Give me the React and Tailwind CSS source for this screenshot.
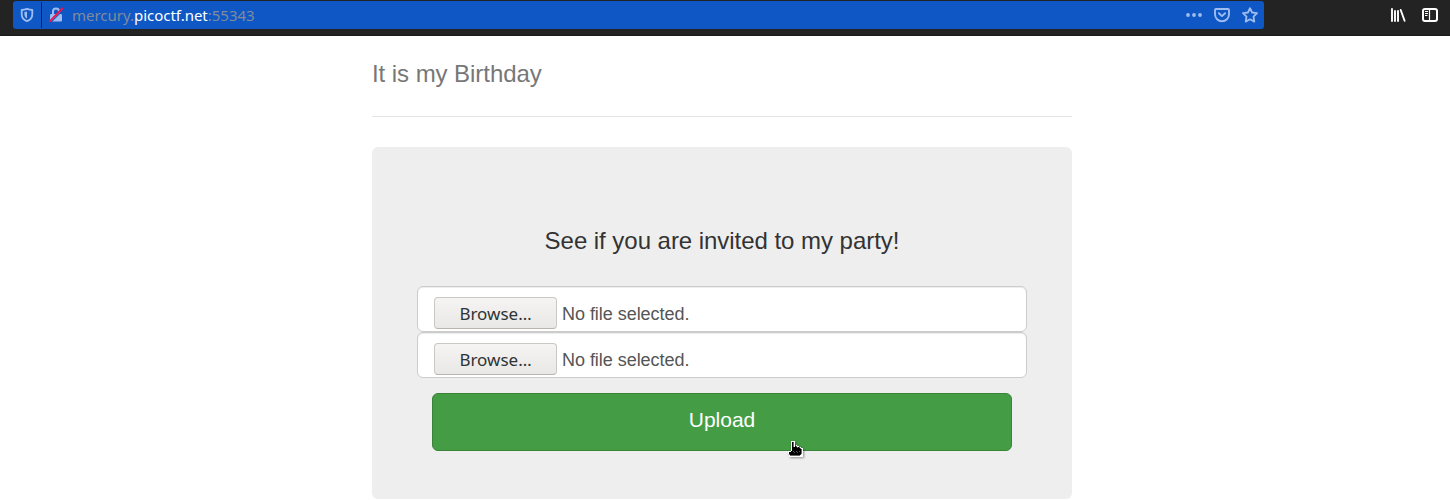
function Shield() {
  return (
    <svg width="16" height="16" viewBox="0 0 16 16" fill="none">
      <path d="M8 1.9C10 2.7 11.8 3 13.3 3V7.2C13.3 10.8 11 13.1 8 14.2C5 13.1 2.7 10.8 2.7 7.2V3C4.2 3 6 2.7 8 1.9Z" stroke="#9dbdf0" strokeWidth="1.8" strokeLinejoin="round" />
      <path d="M8 4.5V11.6C6.3 10.6 5.4 9.1 5.4 7.1V5C6.4 4.9 7.3 4.8 8 4.5Z" fill="#9dbdf0" />
    </svg>
  );
}

function InsecureLock() {
  return (
    <svg width="16" height="16" viewBox="0 0 16 16" fill="none">
      <path d="M5 8V4.6A3 3 0 0 1 11 4.6V8" stroke="#9dbdf0" strokeWidth="2" />
      <rect x="2" y="7" width="12" height="7.6" rx="1.3" fill="#9dbdf0" />
      <path d="M2.8 15.4L15.8 2.4" stroke="#0e57c4" strokeWidth="1.1" />
      <path d="M1.8 14.3L14.3 1.5" stroke="#f0134d" strokeWidth="1.9" strokeLinecap="round" />
    </svg>
  );
}

function Dots() {
  return (
    <svg width="16" height="16" viewBox="0 0 16 16" fill="#9dbdf0">
      <circle cx="2" cy="8" r="1.9" />
      <circle cx="8" cy="8" r="1.9" />
      <circle cx="14" cy="8" r="1.9" />
    </svg>
  );
}

function Pocket() {
  return (
    <svg width="16" height="16" viewBox="0 0 16 16" fill="none" stroke="#9dbdf0" strokeWidth="1.9" strokeLinecap="round" strokeLinejoin="round">
      <path d="M2 2H14Q15 2 15 3V7.3A7 7 0 0 1 1 7.3V3Q1 2 2 2Z" />
      <path d="M4.9 6.2L8 9.1L11.1 6.2" />
    </svg>
  );
}

function Star() {
  return (
    <svg width="16" height="16" viewBox="0 0 16 16" fill="none">
      <path d="M8 1.2L10.1 5.5L15 6.2L11.5 9.6L12.3 14.6L8 12.3L3.7 14.6L4.5 9.6L1 6.2L5.9 5.5Z" stroke="#9dbdf0" strokeWidth="1.8" strokeLinejoin="round" />
    </svg>
  );
}

function Library() {
  return (
    <svg width="16" height="16" viewBox="0 0 16 16" fill="none" stroke="#fff" strokeLinecap="round">
      <path d="M2 2V14M5 4V14M8 4V14" strokeWidth="1.9" />
      <path d="M10.7 3L14.6 13.8" strokeWidth="1.9" />
    </svg>
  );
}

function Sidebar() {
  return (
    <svg width="16" height="16" viewBox="0 0 16 16" fill="none" stroke="#fff">
      <rect x="1" y="2" width="14" height="12" rx="2" strokeWidth="2" />
      <path d="M7.5 2V14" strokeWidth="1.2" />
      <path d="M3 4.5H6M3 6.5H6M3 8.5H5.5" strokeWidth="1" />
    </svg>
  );
}

function Hand() {
  return (
    <svg width="17" height="18" viewBox="0 0 17 18" className="absolute left-[355px] top-[47px] drop-shadow-[1px_1px_1px_rgba(0,0,0,0.4)]" shapeRendering="crispEdges">
      <path d="M5 1H7V6H9V5H10V6H12V7H14V8H15V16H2V14H1V11H5Z" fill="#fff" />
      <path d="M4 1H7V6H10V7H13V8H15V16H2V11H4Z" fill="none" stroke="#fff" />
      <path d="M5 2H6V7H8V6H9V7H10V8H11V7H12V8H13V9H14V14H13V15H3V14H2V12H4V11H5Z" fill="#000" stroke="#000" strokeWidth="0.6" />
      <path d="M6.5 11V12M7.5 12V13M9.5 11V12M10.5 12V13M12.5 11V12" stroke="#555" />
    </svg>
  );
}

function FileField() {
  return (
    <div className="flex h-[46px] w-[610px] items-start rounded-[6px] border border-[#ccc] bg-white px-4 pt-[10px] shadow-[inset_0_1px_1px_rgba(0,0,0,0.075)]">
      <button className="h-8 w-[123px] shrink-0 rounded-[4px] border border-[#cbc7c3] border-b-[#bab4ae] bg-gradient-to-b from-[#f5f4f3] to-[#eae8e6] pt-px font-['Noto_Sans',sans-serif] text-[17px] leading-[30px] text-[#2e3436]">
        Browse…
      </button>
      <span className="ml-[5px] text-[18px] leading-[35px] tracking-[-0.04px] text-[#555]">No file selected.</span>
    </div>
  );
}

export default function App() {
  return (
    <div className="h-[500px] overflow-hidden bg-white font-['Liberation_Sans',Arial,sans-serif]">
      <header className="flex h-9 items-start border-b border-[#1b1b1b] bg-[#232323] pl-[13px] pt-px">
        <div className="flex h-7 w-[1251px] items-center rounded-[3px] bg-[#0e57c4] pl-[6px] pr-[6px]">
          <Shield />
          <span className="ml-[6px] h-[26px] w-px bg-[#092653]" />
          <span className="ml-[6px] flex"><InsecureLock /></span>
          <span className="ml-[8px] whitespace-pre font-['Noto_Sans',sans-serif] text-[15px] leading-7 tracking-[-0.02px] text-[#7e8c9e]">
            mercury.<span className="text-white">picoctf.net</span>:55343
          </span>
          <div className="ml-auto flex gap-3">
            <Dots />
            <Pocket />
            <Star />
          </div>
        </div>
        <div className="ml-auto flex gap-4 pr-3 pt-[6px]">
          <Library />
          <Sidebar />
        </div>
      </header>
      <main className="ml-[372px] w-[700px]">
        <div className="h-[81px] border-b border-[#e5e5e5] pt-[18px]">
          <h3 className="text-[24px] leading-[40px] tracking-[-0.06px] text-[#777]">It is my Birthday</h3>
        </div>
        <section className="mt-[30px] flex h-[352px] flex-col items-center rounded-[6px] bg-[#eee] pt-[81px]">
          <h3 className="text-[24px] leading-[26px] tracking-[-0.04px] text-[#333]">See if you are invited to my party!</h3>
          <div className="mt-[32px]">
            <FileField />
            <FileField />
          </div>
          <div className="relative mt-[15px]">
            <button className="h-[58px] w-[580px] rounded-[6px] border border-[#398439] bg-[#449d44] pb-1 text-[21px] leading-[28px] text-white">
              Upload
            </button>
            <Hand />
          </div>
        </section>
      </main>
    </div>
  );
}
